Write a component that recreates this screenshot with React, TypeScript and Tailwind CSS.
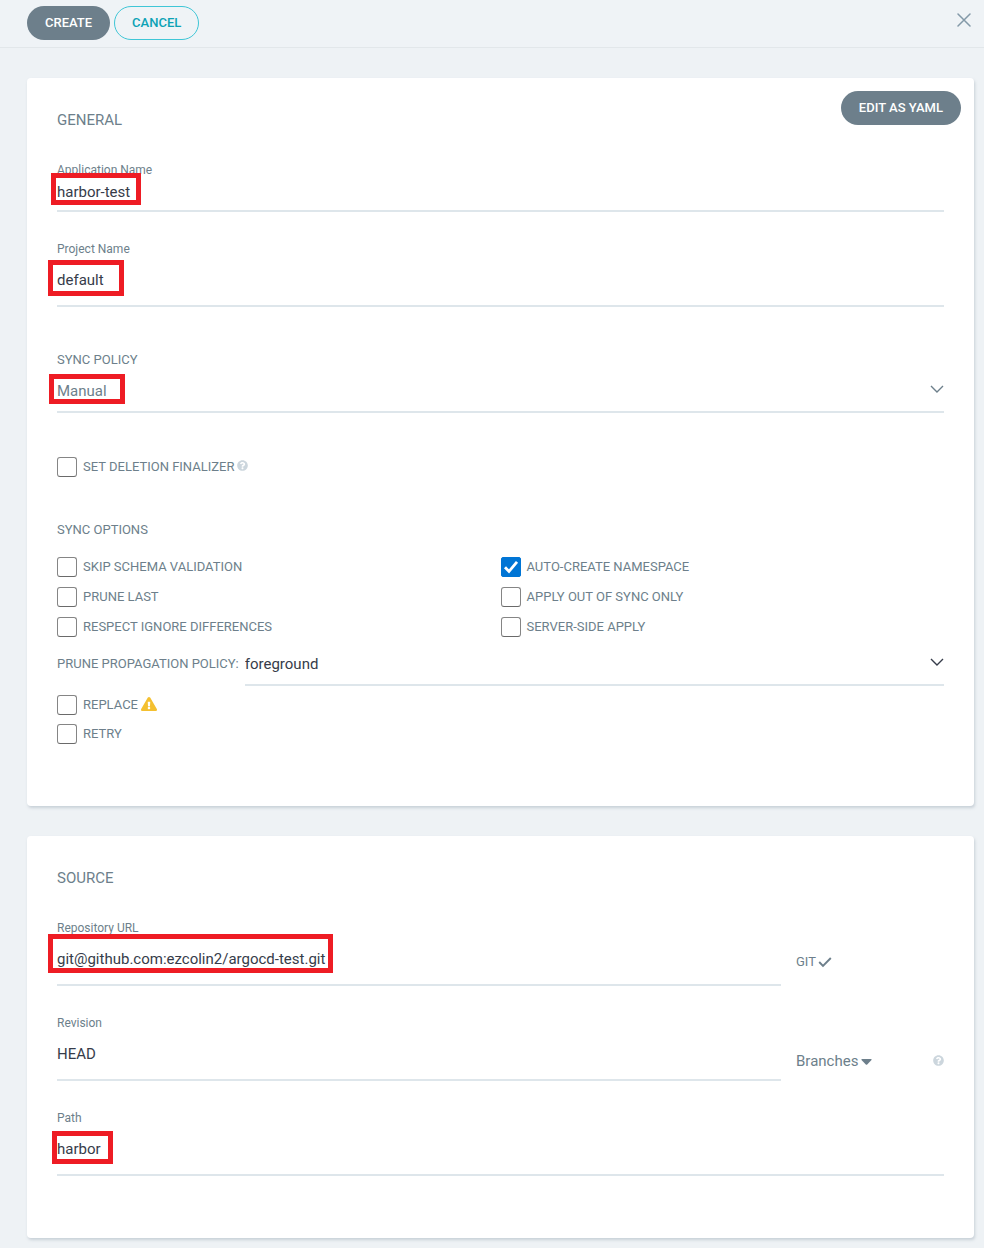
import type { ReactNode } from 'react';
import { FaExclamationTriangle, FaQuestionCircle } from 'react-icons/fa';

function Mark({ className }: { className: string }) {
  return <span aria-hidden="true" className={`pointer-events-none absolute border-[5px] border-[#ee1c24] ${className}`} />;
}

function Help() {
  return <FaQuestionCircle className="mb-[3px] size-[11px] text-[#ccd6dd]" />;
}

function Card({ title, children }: { title: string; children: ReactNode }) {
  return (
    <section className="relative rounded-[4px] bg-white px-[30px] pt-[31px] pb-[62px] shadow-[1px_2px_3px_rgba(130,145,160,0.35)]">
      <h2 className="text-[15px] leading-[22px]">{title}</h2>
      {children}
    </section>
  );
}

function Field({ id, label, value, mark, compact }: { id: string; label: string; value: string; mark?: string; compact?: boolean }) {
  return (
    <div className="relative flex flex-col">
      <label htmlFor={id} className="text-[12px] leading-[18px]">{label}</label>
      <input
        id={id}
        defaultValue={value}
        className={`w-full border-b-2 border-[#dee6eb] bg-transparent text-[15px] text-[#363c4a] outline-none ${compact ? 'h-[33px] pb-[5px]' : 'h-[49px] pb-[3px]'}`}
      />
      {mark && <Mark className={mark} />}
    </div>
  );
}

function Select({ id, options, className }: { id: string; options: string[]; className: string }) {
  return (
    <div className={`relative ${className}`}>
      <select id={id} className="h-[44px] w-full appearance-none border-b-2 border-[#dee6eb] bg-transparent pt-[2px] text-[15px] outline-none">
        {options.map((o) => (
          <option key={o}>{o}</option>
        ))}
      </select>
      <svg aria-hidden="true" viewBox="0 0 14 8" className="pointer-events-none absolute top-4 right-0 h-2 w-3.5" fill="none" stroke="currentColor" strokeWidth="1.4">
        <path d="M1 1l6 6 6-6" />
      </svg>
    </div>
  );
}

function Check({ label, checked, children }: { label: string; checked?: boolean; children?: ReactNode }) {
  return (
    <div className="flex h-5 items-center gap-[3px]">
      <label className="relative flex items-center gap-1.5 text-[13px] leading-5">
        <input
          type="checkbox"
          defaultChecked={checked}
          className="peer size-5 shrink-0 appearance-none rounded-[3px] border border-[#858585] border-b-[#6a6a6a] bg-white checked:rounded-[2px] checked:border-[#0075d5] checked:bg-[#0075d5]"
        />
        <svg aria-hidden="true" viewBox="0 0 20 20" className="pointer-events-none absolute left-0 hidden size-5 peer-checked:block" fill="none" stroke="#fff" strokeWidth="2.8">
          <path d="M4 10.2l4 4.2L16 4.8" />
        </svg>
        {label}
      </label>
      {children}
    </div>
  );
}

export default function App() {
  return (
    <div className="min-h-screen bg-[#eef2f5] font-[Roboto,sans-serif] text-[#6d7f8b]">
      <header className="flex h-12 items-start justify-between border-b border-[#e2e7ea] bg-[#eff3f6] pt-1.5 pr-[7px] pl-[27px]">
        <div className="flex gap-1 text-[13px] font-medium">
          <button className="h-[34px] rounded-full bg-[#6d7f8b] px-[18px] text-white">CREATE</button>
          <button className="h-[34px] rounded-full border border-[#3fc6d6] px-[17px] text-[#0da2b5]">CANCEL</button>
        </div>
        <button aria-label="Close" className="p-1.5 pt-[7px]">
          <svg viewBox="0 0 14 14" className="size-3.5" fill="none" stroke="#8399a8" strokeWidth="1.5" strokeLinecap="round">
            <path d="M1 1l12 12M13 1L1 13" />
          </svg>
        </button>
      </header>

      <main className="flex flex-col gap-[30px] pt-[30px] pr-[10px] pb-[10px] pl-[27px]">
        <Card title="GENERAL">
          <button className="absolute top-[13px] right-[13px] h-[34px] rounded-full bg-[#6d7f8b] px-[18px] text-[13px] font-medium text-white">
            EDIT AS YAML
          </button>
          <div className="mt-[30px] flex flex-col gap-7">
            <Field id="app-name" label="Application Name" value="harbor-test" compact mark="top-3 -left-1.5 h-8 w-[90px]" />
            <Field id="project" label="Project Name" value="default" mark="top-5 left-[-9px] h-9 w-[76px]" />
          </div>

          <div className="relative mt-11">
            <label htmlFor="sync-policy" className="block text-[13px] leading-[18px]">SYNC POLICY</label>
            <Select id="sync-policy" options={['Manual', 'Automatic']} className="" />
            <Mark className="top-[23px] -left-2 h-[30px] w-[76px]" />
          </div>

          <div className="mt-11">
            <Check label="SET DELETION FINALIZER">
              <Help />
            </Check>
          </div>

          <fieldset className="mt-11">
            <legend className="text-[13px] leading-[18px]">SYNC OPTIONS</legend>
            <div className="mt-[18px] grid grid-cols-2 gap-y-2.5">
              <Check label="SKIP SCHEMA VALIDATION" />
              <Check label="AUTO-CREATE NAMESPACE" checked />
              <Check label="PRUNE LAST" />
              <Check label="APPLY OUT OF SYNC ONLY" />
              <Check label="RESPECT IGNORE DIFFERENCES" />
              <Check label="SERVER-SIDE APPLY" />
            </div>
            <div className="mt-[5px] flex items-center gap-1.5">
              <label htmlFor="prune-policy" className="text-[13px]">PRUNE PROPAGATION POLICY:</label>
              <Select id="prune-policy" options={['foreground', 'background', 'orphan']} className="flex-1 text-[#363c4a]" />
            </div>
            <div className="mt-[9px] flex flex-col gap-[9px]">
              <Check label="REPLACE">
                <FaExclamationTriangle className="mb-[3px] size-4 text-[#f4c030]" />
              </Check>
              <Check label="RETRY" />
            </div>
          </fieldset>
        </Card>

        <Card title="SOURCE">
          <div className="mt-[30px] flex flex-col gap-7">
            <div className="grid grid-cols-[1fr_148px] gap-[15px]">
              <Field id="repo" label="Repository URL" value="git@github.com:ezcolin2/argocd-test.git" mark="top-[15px] left-[-9px] h-[39px] w-[285px]" />
              <div className="flex items-center gap-0.5 pt-[18px] text-[13px]">
                GIT
                <svg aria-hidden="true" viewBox="0 0 14 12" className="h-3 w-3.5" fill="none" stroke="currentColor" strokeWidth="1.9">
                  <path d="M1.2 6l3.8 3.9L12.8 2" />
                </svg>
              </div>
            </div>
            <div className="grid grid-cols-[1fr_148px] gap-[15px]">
              <Field id="revision" label="Revision" value="HEAD" />
              <div className="flex items-center justify-between pt-7">
                <button className="flex items-center gap-[3px] text-[15px]">
                  Branches
                  <svg aria-hidden="true" viewBox="0 0 11 6" className="h-1.5 w-[11px]" fill="currentColor">
                    <path d="M1 0h9q1 0 .5 1L6.2 5.5q-.7.7-1.4 0L.5 1Q0 0 1 0z" />
                  </svg>
                </button>
                <Help />
              </div>
            </div>
            <Field id="path" label="Path" value="harbor" mark="top-[22px] left-[-5px] h-[33px] w-[61px]" />
          </div>
        </Card>
      </main>
    </div>
  );
}
